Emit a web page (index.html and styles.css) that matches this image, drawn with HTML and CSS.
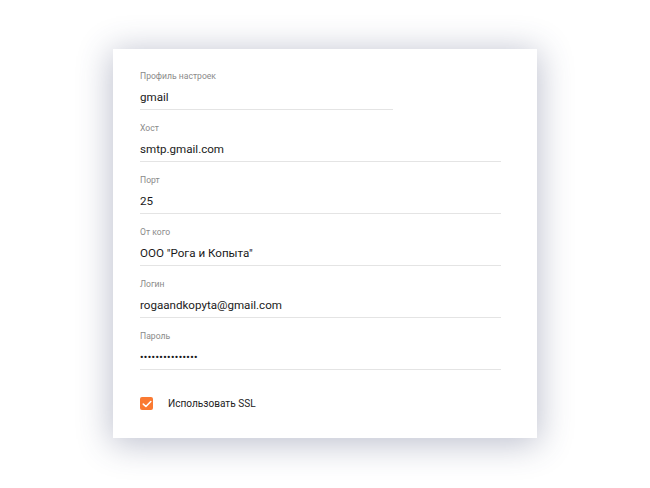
FILE: index.html
```html
<!DOCTYPE html>
<html lang="ru">
<head>
<meta charset="utf-8">
<title>Настройки почты</title>
<link rel="stylesheet" href="styles.css">
</head>
<body>
<div class="page">
  <form class="card">
    <div class="field field-short">
      <div class="label">Профиль настроек</div>
      <div class="value">gmail</div>
    </div>
    <div class="field">
      <div class="label">Хост</div>
      <div class="value">smtp.gmail.com</div>
    </div>
    <div class="field">
      <div class="label">Порт</div>
      <div class="value">25</div>
    </div>
    <div class="field">
      <div class="label">От кого</div>
      <div class="value">ООО "Рога и Копыта"</div>
    </div>
    <div class="field">
      <div class="label">Логин</div>
      <div class="value">rogaandkopyta@gmail.com</div>
    </div>
    <div class="field">
      <div class="label">Пароль</div>
      <div class="value dots">•••••••••••••••</div>
    </div>
    <label class="check">
      <span class="box">
        <svg width="10" height="8" viewBox="0 0 10 8"><path d="M1.3 4.1 L3.9 6.5 L8.8 1.5" fill="none" stroke="#fff" stroke-width="1.6" stroke-linecap="round" stroke-linejoin="round"/></svg>
      </span>
      <span class="check-text">Использовать SSL</span>
    </label>
  </form>
</div>
</body>
</html>
```
FILE: styles.css
```css
html, body {
  margin: 0;
  padding: 0;
  background: #ffffff;
}
body {
  font-family: Roboto, "Liberation Sans", Arial, sans-serif;
  color: #222;
}
.page {
  box-sizing: border-box;
  min-height: 488px;
  padding: 49px 0 0 113px;
}
.card {
  width: 424px;
  box-sizing: border-box;
  padding: 21px 36px 28px 27px;
  background: #fff;
  box-shadow: 0 4px 32px 2px rgba(55, 65, 105, 0.33);
  display: flex;
  flex-direction: column;
}
.field {
  padding-bottom: 3px;
  border-bottom: 1px solid #e4e4e4;
  margin-bottom: 12px;
}
.field-short {
  width: 253px;
}
.label {
  font-size: 8.6px;
  line-height: 12px;
  color: #8a8a8a;
}
.value {
  margin-top: 6px;
  font-size: 11.6px;
  line-height: 18px;
  color: #1a1a1a;
}
.dots {
  font-size: 9.5px;
  font-weight: 700;
  letter-spacing: 0.45px;
}
.check {
  margin-top: 15px;
  display: flex;
  align-items: center;
  height: 13px;
}
.box {
  width: 13px;
  height: 13px;
  border-radius: 2px;
  background: #fa7a32;
  display: flex;
  align-items: center;
  justify-content: center;
}
.check-text {
  margin-left: 15px;
  font-size: 10.1px;
  color: #222;
}
```
